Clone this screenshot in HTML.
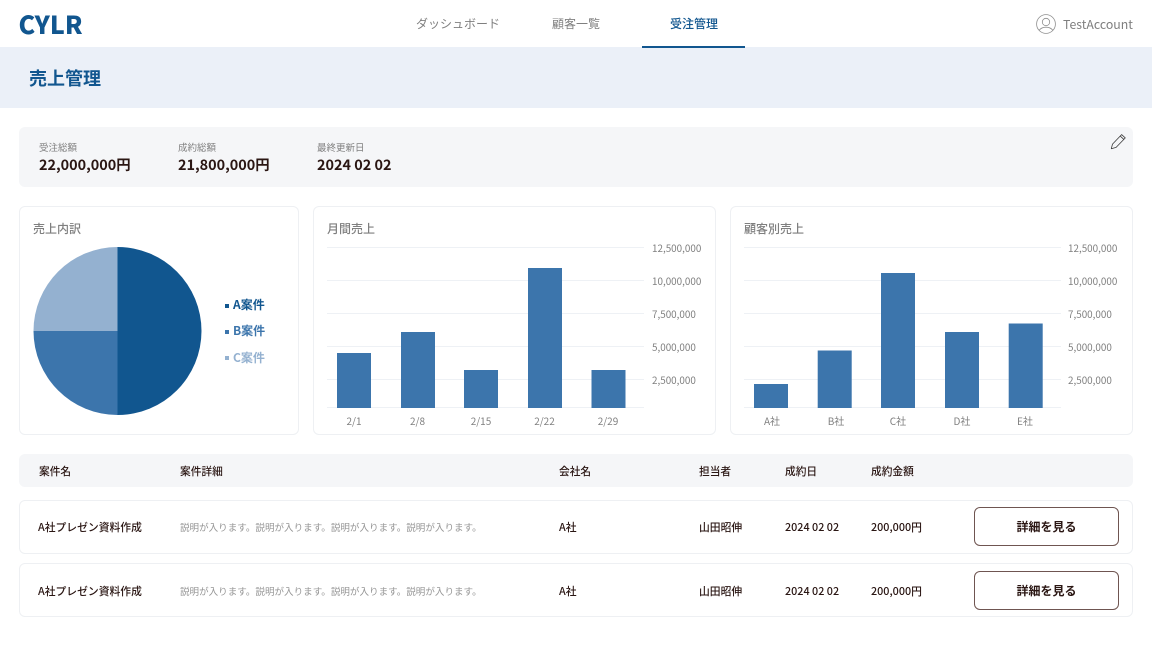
<!DOCTYPE html>
<html lang="ja"><head><meta charset="utf-8"><title>売上管理</title>
<style>
html,body{margin:0;padding:0;background:#fff;width:1152px;height:648px;overflow:hidden}
body{position:relative;font-family:"Noto Sans CJK JP","Liberation Sans",sans-serif;color:#2a1613}
.t{position:absolute;white-space:nowrap;line-height:20px;height:20px}
.b{position:absolute;box-sizing:border-box}
.card{border:1px solid #eef0f3;border-radius:6px;background:#fff}
.g{font-size:9.9px;color:#7f7f7f}
.x{font-size:10px;color:#7f7f7f;width:60px;text-align:center}
.h{font-size:10.7px;font-weight:500;color:#2a1613}
.m{font-size:10.8px;font-weight:500;color:#2a1613}
.btn{border:1px solid #6f5551;border-radius:6px;background:#fff;font-size:12px;font-weight:700;color:#2a1613;text-align:center;line-height:37px}
.tt{font-size:12px;color:#7f7f7f;font-weight:500}
.v{font-size:14.4px;font-weight:700}
.d{font-size:9.56px;color:#959595}
</style></head><body>
<div class="t" style="left:18.500px;top:12px;font-size:25px;font-weight:900;color:#11568f;line-height:24px;height:24px">CYLR</div>
<div class="t" style="left:416px;top:14px;font-size:12px;color:#7f7f7f">ダッシュボード</div>
<div class="t" style="left:552px;top:14px;font-size:12px;color:#7f7f7f">顧客一覧</div>
<div class="t" style="left:670px;top:14px;font-size:12px;color:#11568f;font-weight:500">受注管理</div>
<svg class="b" style="left:1036px;top:14px" width="20" height="20" viewBox="0 0 20 20" fill="none" stroke="#8e8e8e" stroke-width=".8"><circle cx="10" cy="10" r="9.4"/><circle cx="10" cy="8" r="3.7"/><path d="M3.2 16.2C5 14 7.2 13.2 10 13.2s5 .8 6.8 3"/></svg>
<div class="t" style="left:1063px;top:14px;font-size:12.3px;color:#7f7f7f">TestAccount</div>

<div class="b" style="left:0;top:47px;width:1152px;height:61px;background:#ebf0f8"></div>
<div class="b" style="left:642px;top:46px;width:103px;height:2px;background:#11568f"></div>
<div class="t" style="left:29px;top:66px;font-size:18px;font-weight:700;color:#11568f;line-height:24px;height:24px">売上管理</div>

<div class="b" style="left:19px;top:127px;width:1114px;height:60px;background:#f5f6f8;border-radius:6px"></div>
<div class="t" style="left:39px;top:137px;font-size:9.5px;color:#7f7f7f">受注総額</div>
<div class="t v" style="left:39px;top:154.500px">22,000,000円</div>
<div class="t" style="left:178px;top:137px;font-size:9.5px;color:#7f7f7f">成約総額</div>
<div class="t v" style="left:178px;top:154.500px">21,800,000円</div>
<div class="t" style="left:317px;top:137px;font-size:9.5px;color:#7f7f7f">最終更新日</div>
<div class="t v" style="left:317px;top:154.500px">2024 02 02</div>
<svg class="b" style="left:1110px;top:133px" width="17" height="17" viewBox="0 0 17 17" fill="none" stroke="#3a3a3a" stroke-width=".8" stroke-linejoin="round"><path d="M1.3 15.700l1.200-4.600L11.600 1.600l3.700 3.300-9.200 9.500z"/><path d="M10.200 3.100l3.700 3.300"/></svg>

<div class="b card" style="left:19px;top:206px;width:280px;height:229px"></div>
<div class="t tt" style="left:33px;top:219px">売上内訳</div>
<svg class="b" style="left:33px;top:247px" width="169" height="169" viewBox="0 0 169 169">
<path d="M84.500 84V0A84 84 0 0 1 84.500 168z" fill="#11568f"/>
<path d="M84.500 84V168A84 84 0 0 1 .5 84z" fill="#3c75ac"/>
<path d="M84.500 84H.5A84 84 0 0 1 84.500 0z" fill="#94b1d0"/>
</svg>
<div class="b" style="left:225px;top:304px;width:4px;height:4px;background:#11568f"></div>
<div class="t" style="left:233px;top:295px;font-size:12px;font-weight:700;color:#11568f">A案件</div>
<div class="b" style="left:225px;top:330px;width:4px;height:4px;background:#3c75ac"></div>
<div class="t" style="left:233px;top:321px;font-size:12px;font-weight:700;color:#3c75ac">B案件</div>
<div class="b" style="left:225px;top:356px;width:4px;height:4px;background:#94b1d0"></div>
<div class="t" style="left:233px;top:348px;font-size:12px;font-weight:700;color:#94b1d0">C案件</div>

<div class="b card" style="left:313px;top:206px;width:403px;height:229px"></div>
<div class="t tt" style="left:327px;top:219px">月間売上</div>
<svg class="b" style="left:313px;top:240px" width="340" height="172" viewBox="0 0 340 172">
<g fill="#eef1f5"><rect x="14" y="7" width="317" height="1"/><rect x="14" y="40" width="317" height="1"/><rect x="14" y="73" width="317" height="1"/><rect x="14" y="106" width="317" height="1"/><rect x="14" y="139" width="317" height="1"/><rect x="14" y="167" width="317" height="1"/></g>
<g fill="#3c75ac"><rect x="24" y="113" width="34" height="55"/><rect x="88" y="92" width="34" height="76"/><rect x="151" y="130" width="34" height="38"/><rect x="215" y="28" width="34" height="140"/><rect x="278.500" y="130" width="34" height="38"/></g>
</svg>
<div class="t g" style="left:652px;top:237.500px">12,500,000</div>
<div class="t g" style="left:652px;top:270.500px">10,000,000</div>
<div class="t g" style="left:652px;top:303.500px">7,500,000</div>
<div class="t g" style="left:652px;top:336.500px">5,000,000</div>
<div class="t g" style="left:652px;top:369.500px">2,500,000</div>
<div class="t x" style="left:324px;top:411px">2/1</div>
<div class="t x" style="left:387.500px;top:411px">2/8</div>
<div class="t x" style="left:451px;top:411px">2/15</div>
<div class="t x" style="left:514.500px;top:411px">2/22</div>
<div class="t x" style="left:578px;top:411px">2/29</div>

<div class="b card" style="left:730px;top:206px;width:403px;height:229px"></div>
<div class="t tt" style="left:744px;top:219px">顧客別売上</div>
<svg class="b" style="left:730px;top:240px" width="340" height="172" viewBox="0 0 340 172">
<g fill="#eef1f5"><rect x="14" y="7" width="317" height="1"/><rect x="14" y="40" width="317" height="1"/><rect x="14" y="73" width="317" height="1"/><rect x="14" y="106" width="317" height="1"/><rect x="14" y="139" width="317" height="1"/><rect x="14" y="167" width="317" height="1"/></g>
<g fill="#3c75ac"><rect x="24" y="144" width="34" height="24"/><rect x="87.700" y="110.500" width="34" height="57.500"/><rect x="151" y="33" width="34" height="135"/><rect x="215" y="92" width="34" height="76"/><rect x="278.700" y="83.500" width="34" height="84.500"/></g>
</svg>
<div class="t g" style="left:1068px;top:237.500px">12,500,000</div>
<div class="t g" style="left:1068px;top:270.500px">10,000,000</div>
<div class="t g" style="left:1068px;top:303.500px">7,500,000</div>
<div class="t g" style="left:1068px;top:336.500px">5,000,000</div>
<div class="t g" style="left:1068px;top:369.500px">2,500,000</div>
<div class="t x" style="left:742px;top:411px">A社</div>
<div class="t x" style="left:806px;top:411px">B社</div>
<div class="t x" style="left:868px;top:411px">C社</div>
<div class="t x" style="left:932px;top:411px">D社</div>
<div class="t x" style="left:995px;top:411px">E社</div>

<div class="b" style="left:19px;top:454px;width:1114px;height:33px;background:#f5f6f8;border-radius:6px"></div>
<div class="t h" style="left:39px;top:461.500px">案件名</div>
<div class="t h" style="left:180px;top:461.500px">案件詳細</div>
<div class="t h" style="left:559px;top:461.500px">会社名</div>
<div class="t h" style="left:699px;top:461.500px">担当者</div>
<div class="t h" style="left:785px;top:461.500px">成約日</div>
<div class="t h" style="left:871px;top:461.500px">成約金額</div>

<div class="b card" style="left:19px;top:500px;width:1114px;height:54px"></div>
<div class="t m" style="left:38px;top:517px">A社プレゼン資料作成</div>
<div class="t d" style="left:180px;top:517px">説明が入ります。説明が入ります。説明が入ります。説明が入ります。</div>
<div class="t m" style="left:559px;top:517px">A社</div>
<div class="t m" style="left:699px;top:517px">山田昭伸</div>
<div class="t m" style="left:785px;top:517px">2024 02 02</div>
<div class="t m" style="left:871px;top:517px">200,000円</div>
<div class="b btn" style="left:974px;top:507px;width:145px;height:39px">詳細を見る</div>

<div class="b card" style="left:19px;top:563px;width:1114px;height:54px"></div>
<div class="t m" style="left:38px;top:581px">A社プレゼン資料作成</div>
<div class="t d" style="left:180px;top:581px">説明が入ります。説明が入ります。説明が入ります。説明が入ります。</div>
<div class="t m" style="left:559px;top:581px">A社</div>
<div class="t m" style="left:699px;top:581px">山田昭伸</div>
<div class="t m" style="left:785px;top:581px">2024 02 02</div>
<div class="t m" style="left:871px;top:581px">200,000円</div>
<div class="b btn" style="left:974px;top:571px;width:145px;height:39px">詳細を見る</div>
</body></html>
